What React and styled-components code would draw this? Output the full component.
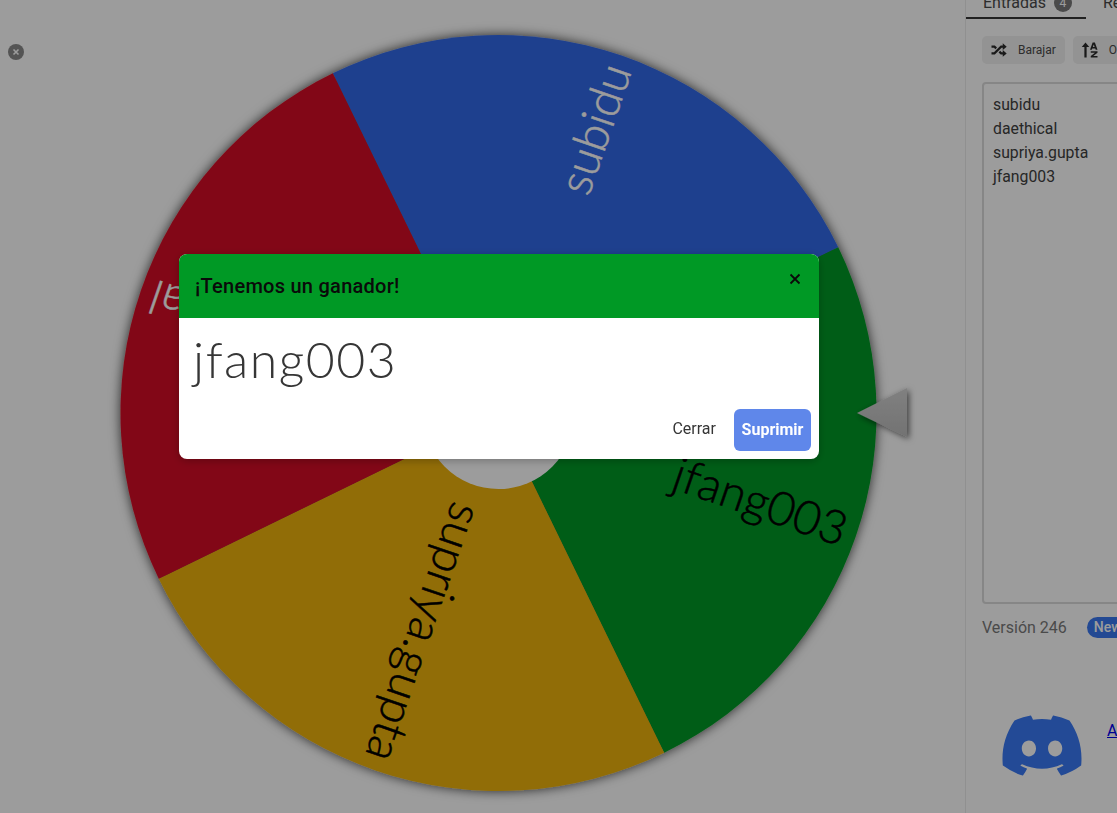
import React from 'react';
import styled, { createGlobalStyle } from 'styled-components';
import { FaDiscord } from 'react-icons/fa';

const GlobalStyle = createGlobalStyle`
  html, body {
    margin: 0;
    padding: 0;
    background: #fff;
    font-family: Roboto, "Liberation Sans", sans-serif;
    overflow: hidden;
  }
`

const Page = styled.div`
  display: flex;
  width: 1117px;
  height: 813px;
  overflow: hidden;
`
const WheelArea = styled.div`
  position: relative;
  flex: 0 0 965px;
  padding: 8px 0 0 73px;
  box-sizing: border-box;
`
const HideButton = styled.div`
  position: absolute;
  left: 8px;
  top: 44px;
  width: 16px;
  height: 16px;
  border-radius: 50%;
  background: #8a8a8a;
  display: flex;
  align-items: center;
  justify-content: center;
  color: #fff;
`
const Side = styled.div`
  flex: 0 0 340px;
  border-left: 1px solid #ececec;
  display: flex;
  flex-direction: column;
`
const Tabs = styled.div`
  display: flex;
  height: 19px;
  overflow: hidden;
  align-items: flex-end;
  margin-bottom: 17px;
`
const Tab = styled.div`
  flex: 0 0 ${p => p.$width}px;
  box-sizing: border-box;
  height: 27px;
  padding-left: 17px;
  display: flex;
  align-items: flex-start;
  gap: 8px;
  font-size: 16px;
  line-height: 22px;
  color: #4a4a4a;
  border-bottom: 2px solid ${p => (p.$active ? '#363636' : 'transparent')};
`
const Count = styled.span`
  width: 18px;
  height: 18px;
  margin-top: 2px;
  border-radius: 50%;
  background: #7a7a7a;
  color: #fff;
  font-size: 12px;
  line-height: 18px;
  text-align: center;
`
const Toolbar = styled.div`
  display: flex;
  gap: 8px;
  padding-left: 16px;
  margin-bottom: 18px;
`
const ToolButton = styled.div`
  display: flex;
  align-items: center;
  gap: 10px;
  height: 28px;
  padding: 0 9px 0 8px;
  border-radius: 5px;
  background: #f0f0f0;
  font-size: 12px;
  color: #4a4a4a;
  svg {
    width: 18px;
    height: 18px;
    fill: #2a2a2a;
    flex: none;
  }
`
const Entries = styled.div`
  box-sizing: border-box;
  margin-left: 16px;
  width: 300px;
  height: 522px;
  padding: 9px;
  border: 2px solid #dbdbdb;
  border-radius: 4px;
  font-size: 15.8px;
  line-height: 24px;
  color: #404040;
`
const VersionRow = styled.div`
  display: flex;
  align-items: center;
  gap: 20px;
  padding-left: 16px;
  margin-top: 13px;
  font-size: 16px;
  color: #7a7a7a;
`
const NewTag = styled.span`
  background: #3a78f0;
  color: #fff;
  font-size: 14px;
  font-weight: 500;
  padding: 2px 10px 3px 7px;
  border-radius: 11px;
`
const Community = styled.div`
  display: flex;
  align-items: flex-start;
  gap: 22px;
  padding-left: 33px;
  margin-top: 73px;
  a {
    margin-top: 10px;
    font-size: 16px;
    color: #0000ee;
    text-decoration: underline;
  }
`
const DiscordIcon = styled(FaDiscord)`
  width: 86px;
  height: 69px;
  color: #3a7af5;
  flex: none;
`
const Overlay = styled.div`
  position: fixed;
  inset: 0;
  background: rgba(0, 0, 0, 0.39);
  display: flex;
  align-items: flex-start;
  padding: 254px 0 0 179px;
`
const Modal = styled.div`
  width: 640px;
  height: 205px;
  border-radius: 8px;
  overflow: hidden;
  background: #fff;
  display: flex;
  flex-direction: column;
  box-shadow: 0 2px 8px rgba(0, 0, 0, 0.25);
`
const ModalHead = styled.div`
  height: 64px;
  flex: none;
  background: #009925;
  display: flex;
  justify-content: space-between;
  padding: 0 16px;
  box-sizing: border-box;
`
const ModalTitle = styled.div`
  margin-top: 20px;
  font-size: 20px;
  letter-spacing: 0.26px;
  line-height: 24px;
  font-weight: 500;
  color: #0a0a0a;
`
const ModalClose = styled.div`
  margin-top: 18px;
  margin-right: 1px;
  width: 14px;
  height: 14px;
  svg {
    display: block;
  }
`
const Winner = styled.div`
  flex: 1;
  padding: 11px 14px 0;
  font-family: Lato, "Open Sans", sans-serif;
  font-weight: 300;
  font-size: 50px;
  letter-spacing: 1.5px;
  line-height: 60px;
  color: #363636;
`
const ModalFoot = styled.div`
  display: flex;
  justify-content: flex-end;
  align-items: center;
  gap: 18px;
  padding: 0 8px 8px 0;
`
const TextButton = styled.div`
  font-size: 16px;
  line-height: 18px;
  margin-top: -2px;
  color: #363636;
`
const PrimaryButton = styled.div`
  width: 77px;
  height: 42px;
  padding-bottom: 2px;
  box-sizing: border-box;
  border-radius: 6px;
  background: #5f87ea;
  color: #fff;
  font-size: 16px;
  font-weight: 700;
  display: flex;
  align-items: center;
  justify-content: center;
`

const CX = 425.5
const CY = 405
const R = 378

const slices = [
  { name: 'subidu', color: '#3369e8', text: '#fff', mid: -71 },
  { name: 'jfang003', color: '#009925', text: '#000', mid: 19 },
  { name: 'supriya.gupta', color: '#eeb211', text: '#000', mid: 109 },
  { name: 'daethical', color: '#d50f25', text: '#fff', mid: 199 },
]

const point = (deg, r) => {
  const a = (deg * Math.PI) / 180
  return `${CX + r * Math.cos(a)} ${CY + r * Math.sin(a)}`
}

const Wheel = () => (
  <svg width="892" height="810" style={{ display: 'block' }}>
    <defs>
      <filter id="soft" x="-10%" y="-10%" width="120%" height="120%">
        <feDropShadow dx="0" dy="0" stdDeviation="6" floodColor="#000" floodOpacity="0.75" />
      </filter>
      <filter id="pointerShadow" x="-30%" y="-30%" width="170%" height="170%">
        <feDropShadow dx="2" dy="2" stdDeviation="3" floodColor="#000" floodOpacity="0.6" />
      </filter>
      <linearGradient id="pointerFill" x1="0" y1="0" x2="0" y2="1">
        <stop offset="0" stopColor="#d2d2d2" />
        <stop offset="1" stopColor="#bcbcbc" />
      </linearGradient>
    </defs>
    <g filter="url(#soft)">
      {slices.map(s => (
        <path
          key={s.name}
          fill={s.color}
          d={`M${CX} ${CY} L${point(s.mid - 45, R)} A${R} ${R} 0 0 1 ${point(s.mid + 45, R)} Z`}
        />
      ))}
    </g>
    <circle cx={CX} cy={CY} r="76" fill="#fff" />
    {slices.map(s => (
      <text
        key={s.name}
        transform={`translate(${CX} ${CY}) rotate(${s.mid}) translate(367 15)`}
        textAnchor="end"
        fill={s.text}
        stroke={s.text}
        strokeWidth="0.5"
        fontFamily="Lato, 'Open Sans', sans-serif"
        fontWeight="300"
        fontSize="47"
      >
        {s.name}
      </text>
    ))}
    <polygon
      points={`784,405 834,380 834,429`}
      fill="url(#pointerFill)"
      filter="url(#pointerShadow)"
    />
  </svg>
)

const App = () => {
  return (
    <>
      <GlobalStyle />
      <Page>
        <WheelArea>
          <HideButton>
            <svg width="8" height="8" viewBox="0 0 8 8">
              <path d="M1.5 1.5L6.5 6.5M6.5 1.5L1.5 6.5" stroke="#fff" strokeWidth="1.6" />
            </svg>
          </HideButton>
          <Wheel />
        </WheelArea>
        <Side>
          <Tabs>
            <Tab $width={120} $active>
              Entradas <Count>4</Count>
            </Tab>
            <Tab $width={120}>Resultados</Tab>
          </Tabs>
          <Toolbar>
            <ToolButton>
              <svg viewBox="0 0 24 24">
                <path d="M17,3L22.25,7.5L17,12L22.25,16.5L17,21V18H14.26L11.44,15.18L13.56,13.06L15.5,15H17V12L17,9H15.5L6.5,18H2V15H5.26L14.26,6H17V3M2,6H6.5L9.32,8.82L7.2,10.94L5.26,9H2V6Z" />
              </svg>
              Barajar
            </ToolButton>
            <ToolButton>
              <svg viewBox="0 0 24 24">
                <path d="M6 2L11 8H7.5V22H4.5V8H1ZM15.5 2H18.5L22 11.5H19.6L19 10H15L14.4 11.5H12ZM15.8 8H18.2L17 4.8ZM13 13.5H22V15.6L16.4 20H22V22H13V19.9L18.6 15.5H13Z" />
              </svg>
              Ordenar
            </ToolButton>
          </Toolbar>
          <Entries>
            <div>subidu</div>
            <div>daethical</div>
            <div>supriya.gupta</div>
            <div>jfang003</div>
          </Entries>
          <VersionRow>
            Versión 246
            <NewTag>New</NewTag>
          </VersionRow>
          <Community>
            <DiscordIcon />
            <a href="#discord">Ayuda</a>
          </Community>
        </Side>
      </Page>
      <Overlay>
        <Modal>
          <ModalHead>
            <ModalTitle>¡Tenemos un ganador!</ModalTitle>
            <ModalClose>
              <svg width="14" height="14" viewBox="0 0 14 14">
                <path d="M2.5 2.5L11.5 11.5M11.5 2.5L2.5 11.5" stroke="#0a0a0a" strokeWidth="1.8" />
              </svg>
            </ModalClose>
          </ModalHead>
          <Winner>jfang003</Winner>
          <ModalFoot>
            <TextButton>Cerrar</TextButton>
            <PrimaryButton>Suprimir</PrimaryButton>
          </ModalFoot>
        </Modal>
      </Overlay>
    </>
  )
}

export default App;
